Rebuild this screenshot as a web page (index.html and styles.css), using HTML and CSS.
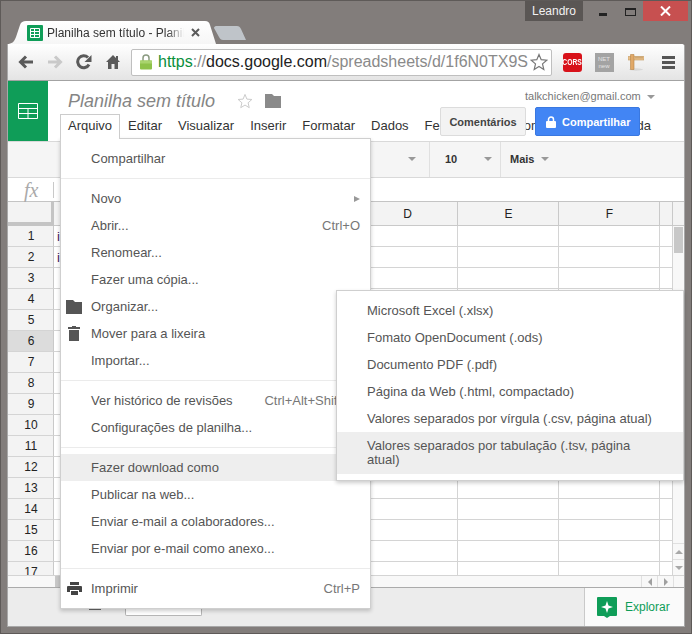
FILE: index.html
```html
<!DOCTYPE html>
<html lang="pt-BR">
<head>
    <meta charset="UTF-8">
    <meta name="viewport" content="width=device-width, initial-scale=1.0">
    <title>Planilha sem título</title>
    <link rel="stylesheet" href="styles.css">
</head>
<body>
<div class="frame">
    <div class="titlebar">
        <div class="tab">
            <svg class="favicon" width="16" height="16" viewBox="0 0 16 16"><rect width="16" height="16" rx="1" fill="#0f9d58"/><path d="M3.500 3.500h9v9h-9z M3.500 6.500h9 M3.500 9.500h9 M7.500 3.500v9" fill="none" stroke="#fff" stroke-width="1"/></svg>
            <span class="tab-title">Planilha sem título - Planil</span>
            <svg class="tab-close" width="9" height="9" viewBox="0 0 9 9"><path d="M1 1l7 7M8 1l-7 7" stroke="#5a5a5a" stroke-width="2"/></svg>
        </div>
        <div class="new-tab"></div>
        <div class="caption">
            <span class="user-badge">Leandro</span>
            <span class="caption-min"></span>
            <span class="caption-max"></span>
            <span class="caption-close"><svg width="11" height="10" viewBox="0 0 11 10"><path d="M1 .5l9 9M10 .5l-9 9" stroke="#fff" stroke-width="2"/></svg></span>
        </div>
    </div>

    <div class="window">
        <div class="browser-bar">
            <span class="nav-btn"><svg width="16" height="14" viewBox="0 0 16 14"><path d="M15 7H3M8 1.500L2.500 7 8 12.500" fill="none" stroke="#5a5a5a" stroke-width="3"/></svg></span>
            <span class="nav-btn"><svg width="16" height="14" viewBox="0 0 16 14"><path d="M1 7h12M8 1.500L13.500 7 8 12.500" fill="none" stroke="#c9c9c9" stroke-width="3"/></svg></span>
            <span class="nav-btn"><svg width="16" height="16" viewBox="0 0 16 16"><path d="M13 10.500A6 6 0 1 1 12 3.500" fill="none" stroke="#5a5a5a" stroke-width="3"/><path d="M15.500 1v7h-7z" fill="#5a5a5a"/></svg></span>
            <span class="nav-btn"><svg width="14" height="14" viewBox="0 0 14 14"><path d="M7 0L0 7h2v7h3.500V9h3v5H12V7h2l-2-2V1h-2v2z" fill="#5a5a5a"/></svg></span>
            <div class="omnibox">
                <svg class="lock" width="12" height="16" viewBox="0 0 12 16"><path d="M3 7V4a3 3 0 0 1 6 0v3" fill="none" stroke="#8a9a80" stroke-width="1.500"/><rect y="6.500" width="12" height="9" rx="1" fill="#8ec24a"/><rect y="6.500" width="12" height="3" fill="#a9d46e"/></svg>
                <span class="url"><span class="url-https">https</span><span class="url-dim">://</span>docs.google.com<span class="url-dim">/spreadsheets/d/1f6N0TX9S</span></span>
                <svg class="omni-star" width="18" height="18" viewBox="0 0 18 18"><path d="M9 1.500l2.200 5.200 5.600.5-4.300 3.700 1.300 5.500L9 13.500l-4.800 2.900 1.300-5.500L1.200 7.200l5.600-.5z" fill="#fff" stroke="#777" stroke-width="1.200"/></svg>
            </div>
            <span class="ext-btn"><span class="ext-cors"><span class="ext-cors-text">CORS</span></span></span>
            <span class="ext-btn"><span class="ext-net">NET<br>new</span></span>
            <span class="ext-btn"><svg width="16" height="17" viewBox="0 0 16 17"><ellipse cx="8" cy="15.500" rx="7" ry="1.200" fill="#d8d8d8"/><path d="M0 2.500h16v3.500H0z" fill="#e8c08c" stroke="#c29a62" stroke-width=".6"/><path d="M2.500 .5h3.500v15H2.500z" fill="#e0a868" stroke="#b98444" stroke-width=".6"/><path d="M8 2.500v2M10 2.500v2M12 2.500v2M14 2.500v2" stroke="#a97c44" stroke-width=".7"/></svg></span>
            <span class="ext-btn"><span class="hamburger"></span></span>
        </div>

        <div class="app">
            <header class="doc-header">
                <div class="sheets-logo">
                    <svg width="20" height="16" viewBox="0 0 20 16"><path d="M.5 .5h19v15H.5z M.5 5.500h19 M.5 10.500h19 M10 5.500v10" fill="none" stroke="#fff"/></svg>
                </div>
                <div class="doc-main">
                    <div class="doc-title-row">
                        <span class="doc-title">Planilha sem título</span>
                        <svg class="doc-star" width="16" height="16" viewBox="0 0 17 17"><path d="M8.500 1.500l2 5 5.300.4-4 3.500 1.200 5.200-4.500-2.800L4 15.600l1.200-5.200-4-3.500 5.300-.4z" fill="none" stroke="#c8c8c8"/></svg>
                        <svg class="doc-folder" width="16" height="14" viewBox="0 0 16 14"><path d="M0 0h7l2 2h7v12H0z" fill="#8a8a8a"/></svg>
                        <span class="account">talkchicken@gmail.com</span>
                        <span class="caret account-caret"></span>
                    </div>
                    <nav class="menubar">
                        <span class="menubar-item is-open">Arquivo</span>
                        <span class="menubar-item">Editar</span>
                        <span class="menubar-item">Visualizar</span>
                        <span class="menubar-item">Inserir</span>
                        <span class="menubar-item">Formatar</span>
                        <span class="menubar-item">Dados</span>
                        <span class="menubar-item">Ferramentas</span>
                        <span class="menubar-item">Complementos</span>
                        <span class="menubar-item">Ajuda</span>
                    </nav>
                </div>
            </header>

            <div class="ribbon">
                <div class="ribbon-group ribbon-font"><span class="caret"></span></div>
                <div class="ribbon-group ribbon-size"><span>10</span><span class="caret"></span></div>
                <div class="ribbon-group ribbon-more"><span>Mais</span><span class="caret"></span></div>
            </div>

            <div class="formula-bar">
                <span class="fx">fx</span>
            </div>

            <div class="grid-area">
                <div class="grid-clip">
                    <table class="sheet">
                        <tr class="col-heads"><th class="corner"></th><th>A</th><th>B</th><th>C</th><th>D</th><th>E</th><th>F</th><th></th></tr>
                        <tr><th>1</th><td>i</td><td></td><td></td><td></td><td></td><td></td><td></td></tr>
                        <tr><th>2</th><td>i</td><td></td><td></td><td></td><td></td><td></td><td></td></tr>
                        <tr><th>3</th><td></td><td></td><td></td><td></td><td></td><td></td><td></td></tr>
                        <tr><th>4</th><td></td><td></td><td></td><td></td><td></td><td></td><td></td></tr>
                        <tr><th>5</th><td></td><td></td><td></td><td></td><td></td><td></td><td></td></tr>
                        <tr><th class="row-active">6</th><td></td><td></td><td></td><td></td><td></td><td></td><td></td></tr>
                        <tr><th>7</th><td></td><td></td><td></td><td></td><td></td><td></td><td></td></tr>
                        <tr><th>8</th><td></td><td></td><td></td><td></td><td></td><td></td><td></td></tr>
                        <tr><th>9</th><td></td><td></td><td></td><td></td><td></td><td></td><td></td></tr>
                        <tr><th>10</th><td></td><td></td><td></td><td></td><td></td><td></td><td></td></tr>
                        <tr><th>11</th><td></td><td></td><td></td><td></td><td></td><td></td><td></td></tr>
                        <tr><th>12</th><td></td><td></td><td></td><td></td><td></td><td></td><td></td></tr>
                        <tr><th>13</th><td></td><td></td><td></td><td></td><td></td><td></td><td></td></tr>
                        <tr><th>14</th><td></td><td></td><td></td><td></td><td></td><td></td><td></td></tr>
                        <tr><th>15</th><td></td><td></td><td></td><td></td><td></td><td></td><td></td></tr>
                        <tr><th>16</th><td></td><td></td><td></td><td></td><td></td><td></td><td></td></tr>
                        <tr><th>17</th><td></td><td></td><td></td><td></td><td></td><td></td><td></td></tr>
                    </table>
                    <div class="vscroll">
                        <div class="vscroll-head"></div>
                        <div class="vscroll-thumb"></div>
                        <div class="vscroll-track"></div>
                        <div class="scroll-btn"><span class="arrow-up"></span></div>
                        <div class="scroll-btn"><span class="arrow-down"></span></div>
                    </div>
                </div>
                <div class="hscroll">
                    <div class="hscroll-thumb"></div>
                    <div class="hscroll-btn"><span class="arrow-left"></span></div>
                    <div class="hscroll-btn"><span class="arrow-right"></span></div>
                    <div class="hscroll-end"></div>
                </div>
            </div>

            <footer class="sheet-bar">
                <span class="sheet-list"></span>
                <span class="sheet-tab"></span>
                <div class="explore">
                    <svg width="20" height="21" viewBox="0 0 20 21"><path d="M1 0h18a1 1 0 0 1 1 1v17a1 1 0 0 1-1 1h-6l-3 2-3-2H1a1 1 0 0 1-1-1V1a1 1 0 0 1 1-1z" fill="#0f9d58"/><path d="M10 4l1.500 4.500L16 10l-4.500 1.500L10 16l-1.500-4.500L4 10l4.500-1.500z" fill="#fff"/></svg>
                    <span>Explorar</span>
                </div>
            </footer>
        </div>
    </div>
</div>

<div class="share-box">
    <span class="btn-comments">Comentários</span>
    <span class="btn-share">
        <svg width="10" height="12" viewBox="0 0 10 12"><path d="M2.500 5V3.500a2.500 2.500 0 0 1 5 0V5" fill="none" stroke="#fff" stroke-width="1.500"/><rect y="5" width="10" height="7" rx="1" fill="#fff"/></svg>
        Compartilhar
    </span>
</div>

<div class="menu file-menu">
    <div class="menu-item"><span class="menu-icon"></span>Compartilhar</div>
    <div class="menu-sep"></div>
    <div class="menu-item"><span class="menu-icon"></span>Novo<span class="submenu-arrow"></span></div>
    <div class="menu-item"><span class="menu-icon"></span>Abrir...<span class="shortcut">Ctrl+O</span></div>
    <div class="menu-item"><span class="menu-icon"></span>Renomear...</div>
    <div class="menu-item"><span class="menu-icon"></span>Fazer uma cópia...</div>
    <div class="menu-item"><span class="menu-icon"><svg width="16" height="14" viewBox="0 0 16 14"><path d="M0 0h7l2 2h7v12H0z" fill="#555"/></svg></span>Organizar...</div>
    <div class="menu-item"><span class="menu-icon"><svg class="icon-trash" width="12" height="15" viewBox="0 0 12 15"><path d="M4 0h4v1h4v2H0V1h4zM1 4h10v11H1z" fill="#555"/></svg></span>Mover para a lixeira</div>
    <div class="menu-item"><span class="menu-icon"></span>Importar...</div>
    <div class="menu-sep"></div>
    <div class="menu-item"><span class="menu-icon"></span>Ver histórico de revisões<span class="shortcut shortcut-long">Ctrl+Alt+Shift+H</span></div>
    <div class="menu-item"><span class="menu-icon"></span>Configurações de planilha...</div>
    <div class="menu-sep"></div>
    <div class="menu-item is-active"><span class="menu-icon"></span>Fazer download como</div>
    <div class="menu-item"><span class="menu-icon"></span>Publicar na web...</div>
    <div class="menu-item"><span class="menu-icon"></span>Enviar e-mail a colaboradores...</div>
    <div class="menu-item"><span class="menu-icon"></span>Enviar por e-mail como anexo...</div>
    <div class="menu-sep"></div>
    <div class="menu-item"><span class="menu-icon"><svg class="icon-print" width="15" height="13" viewBox="0 0 15 13"><path d="M3 0h9v3H3zM1 4h13a1 1 0 0 1 1 1v5h-3V8H3v2H0V5a1 1 0 0 1 1-1zM4 9h7v4H4z" fill="#444"/></svg></span>Imprimir<span class="shortcut">Ctrl+P</span></div>
</div>

<div class="menu download-menu">
    <div class="sub-item">Microsoft Excel (.xlsx)</div>
    <div class="sub-item">Fomato OpenDocument (.ods)</div>
    <div class="sub-item">Documento PDF (.pdf)</div>
    <div class="sub-item">Página da Web (.html, compactado)</div>
    <div class="sub-item">Valores separados por vírgula (.csv, página atual)</div>
    <div class="sub-item is-active">Valores separados por tabulação (.tsv, página atual)</div>
</div>
</body>
</html>
```

FILE: styles.css
```css
* {
    box-sizing: border-box;
}

body {
    margin: 0;
    font-family: "Liberation Sans", Arial, sans-serif;
    font-size: 13px;
    color: #333;
    overflow: hidden;
}

.frame {
    width: 692px;
    height: 634px;
    padding: 0 6px;
    background-color: #827d7b;
    border: 1px solid #5e5a58;
}

/* title bar and tabs */
.titlebar {
    display: flex;
    align-items: flex-end;
    height: 43px;
}

.tab {
    display: flex;
    align-items: center;
    width: 209px;
    height: 23px;
    padding-left: 20px;
    background: linear-gradient(#ffffff, #f6f6f6);
    clip-path: path("M0 23 C5 23 7 21 9 16 L13 4 C14 1 16 0 19 0 L198 0 C201 0 202 1 203 4 L209 23 Z");
}

.favicon {
    flex: none;
}

.tab-title {
    width: 137px;
    margin-left: 4px;
    font-size: 12px;
    white-space: nowrap;
    overflow: hidden;
    color: #333;
    -webkit-mask-image: linear-gradient(to right, #000 88%, transparent);
    mask-image: linear-gradient(to right, #000 88%, transparent);
}

.tab-close {
    margin-left: 7px;
}

.new-tab {
    width: 32px;
    height: 14px;
    margin: 0 0 4px -2px;
    background-color: #bfc4c9;
    clip-path: path("M2 0 L23 0 C25 0 26 1 27 3 L32 14 L9 14 C7 14 6 13 5 11 L0 2 C0 1 1 0 2 0 Z");
}

.caption {
    display: flex;
    align-self: flex-start;
    margin-left: auto;
    margin-right: -3px;
    height: 20px;
}

.user-badge {
    width: 58px;
    background-color: #5a5654;
    color: #f2f2f2;
    font-size: 12px;
    line-height: 20px;
    text-align: center;
}

.caption-min {
    width: 8px;
    height: 3px;
    margin: 12px 0 0 16px;
    background-color: #222;
}

.caption-max {
    width: 11px;
    height: 8px;
    margin: 7px 0 0 18px;
    border: 1px solid #222;
    border-top-width: 2px;
}

.caption-close {
    display: flex;
    align-items: center;
    justify-content: center;
    width: 45px;
    margin-left: 7px;
    background-color: #c75050;
}

/* browser window */
.window {
    height: 583px;
    background-color: #fff;
    border: 1px solid #a8a8a8;
    border-top: none;
    border-top-right-radius: 3px;
}

.browser-bar {
    display: flex;
    align-items: center;
    height: 37px;
    padding-left: 3px;
    background: linear-gradient(#ffffff, #e4e4e4);
    border-bottom: 1px solid #a3a3a3;
    border-top-right-radius: 3px;
}

.nav-btn {
    display: flex;
    align-items: center;
    justify-content: center;
    width: 29px;
}

.omnibox {
    display: flex;
    align-items: center;
    width: 421px;
    height: 27px;
    margin-left: 4px;
    padding: 0 3px 0 8px;
    background-color: #fff;
    border: 1px solid #bfbfbf;
    border-radius: 2px;
}

.lock {
    flex: none;
}

.url {
    flex: 1;
    min-width: 0;
    margin-left: 6px;
    font-size: 16px;
    white-space: nowrap;
    overflow: hidden;
    color: #222;
}

.url-https {
    color: #0a8f3c;
}

.url-dim {
    color: #8a8a8a;
}

.omni-star {
    flex: none;
}

.omnibox + .ext-btn {
    margin-left: 4px;
}

.ext-btn {
    display: flex;
    align-items: center;
    justify-content: center;
    width: 32px;
}

.ext-cors {
    display: flex;
    justify-content: center;
    width: 19px;
    height: 19px;
    background-color: #d8121a;
    border-radius: 3px;
    color: #fff;
    font-size: 9px;
    font-weight: bold;
    line-height: 19px;
}

.ext-cors-text {
    transform: scaleX(0.75);
}

.ext-net {
    width: 19px;
    height: 19px;
    padding-top: 3px;
    background-color: #a3a3a3;
    color: #e4e4e4;
    font-size: 6px;
    line-height: 7px;
    text-align: center;
}

.hamburger {
    width: 13px;
    height: 13px;
    border-top: 3px solid #555;
    border-bottom: 3px solid #555;
    background: linear-gradient(#555, #555) center / 100% 3px no-repeat;
}

/* docs header */
.app {
    height: 546px;
}

.doc-header {
    display: flex;
    height: 60px;
}

.sheets-logo {
    display: flex;
    align-items: center;
    justify-content: center;
    width: 40px;
    background-color: #0f9d58;
}

.doc-main {
    flex: 1;
    min-width: 0;
}

.doc-title-row {
    display: flex;
    align-items: center;
    height: 33px;
    padding: 7px 0 0 20px;
}

.doc-title {
    width: 169px;
    color: #858585;
    font-size: 18px;
    font-style: italic;
}

.doc-folder {
    margin-left: 12px;
}

.account {
    margin-left: 244px;
    margin-top: -11px;
    color: #777;
    font-size: 11px;
}

.account-caret {
    margin: -9px 0 0 6px;
}

.caret {
    display: inline-block;
    width: 0;
    height: 0;
    border-left: 4px solid transparent;
    border-right: 4px solid transparent;
    border-top: 4px solid #999;
}

.menubar {
    display: flex;
    height: 25px;
    padding-left: 12px;
}

.menubar-item {
    position: relative;
    height: 25px;
    padding: 4px 8px 0;
    color: #333;
    line-height: 16px;
    white-space: nowrap;
}

.menubar-item.is-open {
    z-index: 12;
    padding: 3px 7px 0;
    background-color: #fff;
    border: 1px solid #ccc;
    border-bottom: none;
}

.share-box {
    position: absolute;
    z-index: 5;
    left: 440px;
    top: 107px;
    display: flex;
    gap: 9px;
    height: 29px;
    font-size: 11px;
    font-weight: bold;
}

.btn-comments {
    display: flex;
    align-items: center;
    justify-content: center;
    width: 86px;
    background-color: #f3f3f3;
    border: 1px solid #dcdcdc;
    border-radius: 2px;
    color: #444;
}

.btn-share {
    display: flex;
    align-items: center;
    gap: 6px;
    width: 105px;
    padding-left: 10px;
    background-color: #4285f4;
    border: 1px solid #3a78e0;
    border-radius: 2px;
    color: #fff;
}

.ribbon {
    display: flex;
    height: 37px;
    padding-bottom: 2px;
    background-color: #f5f5f5;
    border-top: 1px solid #d9d9d9;
    border-bottom: 1px solid #d9d9d9;
    color: #333;
    font-size: 11px;
    font-weight: bold;
}

.ribbon-group {
    display: flex;
    align-items: center;
    margin-bottom: -2px;
    padding-bottom: 2px;
    border-right: 1px solid #e0e0e0;
}

.ribbon-font {
    justify-content: flex-end;
    width: 422px;
    padding-right: 13px;
}

.ribbon-size {
    justify-content: space-between;
    width: 71px;
    padding: 0 8px 2px 15px;
}

.ribbon-more {
    padding-left: 9px;
    border-right: none;
}

.ribbon-more .caret {
    margin-left: 7px;
}

.formula-bar {
    display: flex;
    align-items: center;
    height: 24px;
    border-bottom: 1px solid #c4c4c4;
}

.fx {
    width: 46px;
    height: 16px;
    padding-left: 16px;
    border-right: 1px solid #c9c9c9;
    color: #aaa;
    font-family: "Liberation Serif", serif;
    font-size: 20px;
    font-style: italic;
    line-height: 16px;
}

/* grid */
.grid-area {
    height: 385px;
}

.grid-clip {
    display: flex;
    height: 373px;
    overflow: hidden;
}

.sheet {
    flex: none;
    width: 665px;
    height: 381px;
    border-collapse: separate;
    border-spacing: 0;
    table-layout: fixed;
    font-size: 12px;
}

.sheet th,
.sheet td {
    height: 21px;
    padding: 0;
    width: 101px;
    border-right: 1px solid #d4d4d4;
    border-bottom: 1px solid #d4d4d4;
}

.sheet td {
    padding-left: 3px;
    color: #4a1a5c;
    font-size: 13px;
    overflow: hidden;
}

.sheet th {
    padding-left: 1px;
    background-color: #f3f3f3;
    color: #222;
    font-weight: normal;
    text-align: center;
}

.sheet tr th:first-child {
    width: 46px;
    border-right-color: #c9c9c9;
}

.sheet th:last-child,
.sheet td:last-child {
    width: 13px;
}

.sheet .col-heads th {
    height: 24px;
    border-bottom-color: #c9c9c9;
    border-right-color: #c9c9c9;
}

.sheet .col-heads .corner {
    border-right: 3px solid #c4c4c4;
    border-bottom: 4px solid #c4c4c4;
}

.sheet .row-active {
    background-color: #dcdcdc;
}

.vscroll {
    display: flex;
    flex-direction: column;
    width: 11px;
    height: 373px;
    background-color: #f8f8f8;
}

.vscroll-head {
    height: 24px;
    background-color: #f3f3f3;
    border-bottom: 1px solid #c9c9c9;
}

.vscroll-thumb {
    width: 9px;
    height: 26px;
    margin: 1px 0 0 1px;
    background-color: #c8c8c8;
}

.vscroll-track {
    flex: 1;
}

.scroll-btn {
    display: flex;
    align-items: center;
    justify-content: center;
    height: 16px;
    border-top: 1px solid #e0e0e0;
}

.arrow-up,
.arrow-down,
.arrow-left,
.arrow-right {
    width: 0;
    height: 0;
    border: 4px solid transparent;
}

.arrow-up {
    border-top: none;
    border-bottom-color: #a8a8a8;
}

.arrow-down {
    border-bottom: none;
    border-top-color: #a8a8a8;
}

.arrow-left {
    border-left: none;
    border-right-color: #a0a0a0;
}

.arrow-right {
    border-right: none;
    border-left-color: #a0a0a0;
}

.hscroll {
    display: flex;
    height: 12px;
    background-color: #f8f8f8;
    border-top: 1px solid #d4d4d4;
}

.hscroll-thumb {
    width: 5px;
    margin-left: 47px;
    margin-right: 581px;
    background-color: #c8c8c8;
}

.hscroll-btn {
    display: flex;
    align-items: center;
    justify-content: center;
    width: 16px;
    border-left: 1px solid #e0e0e0;
}

.hscroll-end {
    width: 11px;
    border-left: 1px solid #e0e0e0;
}

.sheet-bar {
    display: flex;
    height: 39px;
    background-color: #ececec;
    border-top: 1px solid #ababab;
}

.sheet-list {
    width: 12px;
    height: 22px;
    margin-left: 81px;
    border-bottom: 2px solid #666;
}

.sheet-tab {
    width: 77px;
    height: 28px;
    margin-left: 24px;
    background-color: #fff;
    border: 1px solid #b5b5b5;
    border-top: none;
    border-radius: 0 0 2px 2px;
}

.explore {
    display: flex;
    align-items: center;
    gap: 8px;
    width: 100px;
    margin-left: auto;
    padding-left: 12px;
    background-color: #fafafa;
    border-left: 1px solid #c9c9c9;
    color: #0f9d58;
    font-size: 12px;
}

/* open menus */
.menu {
    position: absolute;
    background-color: #fff;
    border: 1px solid #cfcfcf;
    box-shadow: 0 2px 4px rgba(0, 0, 0, 0.2);
    color: #555;
}

.file-menu {
    z-index: 10;
    left: 60px;
    top: 138px;
    width: 311px;
    height: 471px;
    padding: 6px 0;
}

.menu-item {
    display: flex;
    align-items: center;
    height: 27px;
    padding-right: 10px;
    white-space: nowrap;
}

.menu-item.is-active,
.sub-item.is-active {
    background-color: #eeeeee;
}

.menu-icon {
    flex: none;
    display: flex;
    align-items: center;
    width: 30px;
    padding-left: 5px;
}

.icon-trash {
    margin-left: 2px;
}

.icon-print {
    margin-left: 1px;
}

.menu-sep {
    height: 13px;
    background: linear-gradient(#ebebeb, #ebebeb) 0 6px / 100% 1px no-repeat;
}

.shortcut {
    margin-left: auto;
    color: #777;
}

.shortcut-long {
    margin-right: 2px;
}

.submenu-arrow {
    width: 0;
    height: 0;
    margin-left: auto;
    border-left: 6px solid #999;
    border-top: 3px solid transparent;
    border-bottom: 3px solid transparent;
}

.download-menu {
    z-index: 11;
    left: 336px;
    top: 290px;
    width: 348px;
    height: 191px;
    padding: 6px 0;
}

.sub-item {
    display: flex;
    align-items: center;
    min-height: 27px;
    padding: 0 24px 0 30px;
    line-height: 14px;
}

.sub-item.is-active {
    height: 42px;
}
```
